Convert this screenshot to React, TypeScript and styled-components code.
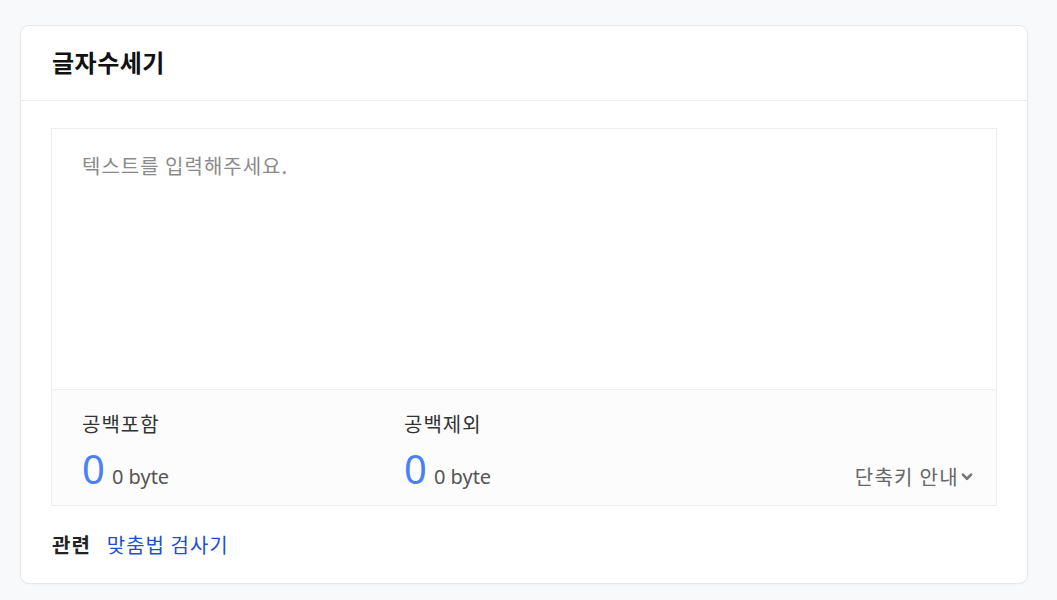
import React, { useState } from 'react';
import styled, { createGlobalStyle } from 'styled-components';

const GlobalStyle = createGlobalStyle`
  html, body {
    margin: 0;
    padding: 0;
    background: #f8f9fb;
    font-family: "Noto Sans CJK KR", "Noto Sans", sans-serif;
  }
`;

const Page = styled.div`
  padding: 25px 29px 16px 20px;
`;

const Card = styled.section`
  background: #fff;
  border: 1px solid #e6e8eb;
  border-radius: 9px;
  box-shadow: 0 1px 2px rgba(0, 0, 0, 0.03);
`;

const CardHeader = styled.header`
  display: flex;
  align-items: center;
  height: 74px;
  padding: 0 31px;
  border-bottom: 1px solid #eceef1;
`;

const Title = styled.h1`
  margin: 0;
  margin-top: -3px;
  font-size: 24px;
  font-weight: 700;
  letter-spacing: 0.5px;
  color: #111;
`;

const CardBody = styled.div`
  padding: 27px 30px 24px 30px;
`;

const Editor = styled.div`
  border: 1px solid #eceef0;
`;

const TextArea = styled.textarea`
  display: block;
  box-sizing: border-box;
  width: 100%;
  height: 260px;
  padding: 22px 30px;
  border: none;
  outline: none;
  resize: none;
  font-family: inherit;
  font-size: 20px;
  line-height: 30px;
  letter-spacing: 1px;
  color: #222;

  &::placeholder {
    color: #8a8a8a;
  }
`;

const Footer = styled.div`
  display: flex;
  align-items: flex-end;
  height: 116px;
  box-sizing: border-box;
  padding: 19px 22px 12px 30px;
  border-top: 1px solid #eceef0;
  background: #fcfcfc;
`;

const Stat = styled.div`
  width: 322px;
  align-self: stretch;
  display: flex;
  flex-direction: column;
`;

const StatLabel = styled.div`
  font-size: 20px;
  line-height: 30px;
  letter-spacing: 1px;
  color: #333;
`;

const StatValue = styled.div`
  display: flex;
  align-items: baseline;
  gap: 7px;
  margin-top: auto;
`;

const Count = styled.span`
  font-size: 40px;
  line-height: 48px;
  color: #4a80f0;
  font-family: "Noto Sans", sans-serif;
`;

const Bytes = styled.span`
  font-size: 20px;
  color: #555;
  font-family: "Noto Sans", sans-serif;
`;

const ShortcutButton = styled.button`
  margin-left: auto;
  display: flex;
  align-items: center;
  gap: 1px;
  padding: 0 0 2px;
  border: none;
  background: none;
  font-family: inherit;
  font-size: 20px;
  letter-spacing: 1.3px;
  color: #666;
  cursor: pointer;
`;

const Related = styled.div`
  display: flex;
  align-items: center;
  gap: 16px;
  margin-top: 24px;
  padding-left: 1px;
  font-size: 20px;
  letter-spacing: 1px;
`;

const RelatedLabel = styled.strong`
  font-weight: 700;
  color: #222;
`;

const RelatedLink = styled.a`
  color: #1d4fcf;
  text-decoration: none;
`;

const Chevron = () => (
  <svg width="14" height="14" viewBox="0 0 24 24" fill="none" stroke="#777" strokeWidth="4.5" strokeLinecap="round" strokeLinejoin="round">
    <path d="M5 8l7 7 7-7" />
  </svg>
);

const countBytes = (s: string) => new TextEncoder().encode(s).length;

export default function App() {
  const [text, setText] = useState('');
  const noSpace = text.replace(/\s/g, '');

  return (
    <>
      <GlobalStyle />
      <Page>
        <Card>
          <CardHeader>
            <Title>글자수세기</Title>
          </CardHeader>
          <CardBody>
            <Editor>
              <TextArea
                placeholder="텍스트를 입력해주세요."
                value={text}
                onChange={(e) => setText(e.target.value)}
              />
              <Footer>
                <Stat>
                  <StatLabel>공백포함</StatLabel>
                  <StatValue>
                    <Count>{text.length}</Count>
                    <Bytes>{countBytes(text)} byte</Bytes>
                  </StatValue>
                </Stat>
                <Stat>
                  <StatLabel>공백제외</StatLabel>
                  <StatValue>
                    <Count>{noSpace.length}</Count>
                    <Bytes>{countBytes(noSpace)} byte</Bytes>
                  </StatValue>
                </Stat>
                <ShortcutButton>
                  단축키 안내
                  <Chevron />
                </ShortcutButton>
              </Footer>
            </Editor>
            <Related>
              <RelatedLabel>관련</RelatedLabel>
              <RelatedLink href="#">맞춤법 검사기</RelatedLink>
            </Related>
          </CardBody>
        </Card>
      </Page>
    </>
  );
}
